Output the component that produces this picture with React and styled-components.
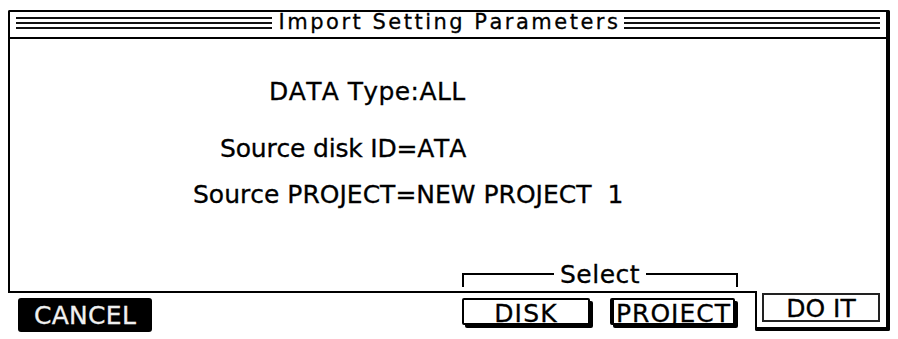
import React from 'react'
import styled, { createGlobalStyle } from 'styled-components'

const Global = createGlobalStyle`
  html, body {
    margin: 0;
    background: #fff;
  }
  body {
    font-family: "DejaVu Sans", "Liberation Sans", sans-serif;
    font-kerning: none;
    font-variant-ligatures: none;
    color: #000;
    -webkit-text-stroke: 0.3px currentColor;
  }
`

const Screen = styled.div`
  width: 898px;
  height: 339px;
  box-sizing: border-box;
  padding: 10px 0 0 8px;
  overflow: hidden;
`

const Window = styled.div`
  width: 882px;
  display: flex;
  flex-direction: column;
`

const Panel = styled.div`
  border: 2px solid #000;
  border-right-width: 4px;
  border-bottom: none;
  border-radius: 2px 2px 0 0;
`

const TitleBar = styled.div`
  height: 25px;
  display: flex;
  align-items: flex-start;
  padding: 0 6px;
  border-bottom: 2px solid #000;
`

const Stripes = styled.div`
  flex: 1;
  height: 12px;
  margin-top: 5px;
  background: repeating-linear-gradient(to bottom, #111 0 2px, transparent 2px 5px);
`

const Title = styled.span`
  font-size: 21px;
  line-height: 20px;
  letter-spacing: 2.5px;
  margin: 0 4px 0 7px;
  white-space: nowrap;
`

const Body = styled.div`
  height: 252px;
  display: flex;
  flex-direction: column;
`

const InfoLine = styled.div`
  font-size: 25px;
  line-height: 24px;
  white-space: pre;
  margin-left: ${p => p.$indent}px;
  margin-top: ${p => p.$gap}px;
  letter-spacing: ${p => p.$tracking}px;
`

const SelectRow = styled.div`
  margin: auto 0 4px 452px;
  width: 276px;
  height: 24px;
  display: flex;
  gap: 6px;
`

const Bracket = styled.div`
  flex: 1;
  margin-top: 10px;
  border-top: 2px solid #000;
  border-${p => p.$side}: 2px solid #000;
`

const SelectLabel = styled.span`
  font-size: 25px;
  line-height: 24px;
  letter-spacing: 0.5px;
`

const Footer = styled.div`
  display: flex;
`

const LeftBar = styled.div`
  width: 747px;
  box-sizing: border-box;
  border-top: 2px solid #000;
  display: flex;
  align-items: flex-start;
  padding: 5px 0 0 10px;
`

const Tab = styled.div`
  flex: 1;
  height: 40px;
  box-sizing: border-box;
  border: solid #000;
  border-width: 0 4px 4px 2px;
  border-radius: 0 0 2px 2px;
  padding: 2px 0 5px 5px;
`

const CancelButton = styled.div`
  width: 134px;
  height: 34px;
  box-sizing: border-box;
  padding-top: 6px;
  background: #000;
  color: #f0f0f0;
  border-radius: 3px;
  font-size: 25px;
  line-height: 24px;
  letter-spacing: 0.3px;
  text-align: center;
`

const KeyGroup = styled.div`
  margin-left: 310px;
  display: flex;
  gap: 20px;
`

const Key = styled.div`
  width: ${p => p.$width}px;
  height: 27px;
  box-sizing: border-box;
  border: 2px solid #000;
  border-left-width: ${p => (p.$heavy ? 4 : 2)}px;
  border-radius: 2px;
  box-shadow: 3px 3px 0 #000;
  background: #fff;
  padding-top: 4px;
  font-size: 25px;
  line-height: 19px;
  letter-spacing: ${p => p.$tracking}px;
  text-align: center;
`

const DoItButton = styled.div`
  width: 118px;
  height: 29px;
  box-sizing: border-box;
  border: 2px solid #222;
  padding-top: 4px;
  font-size: 25px;
  line-height: 19px;
  text-align: center;
  white-space: pre;
`

export default function App() {
  return (
    <Screen>
      <Global />
      <Window>
        <Panel>
          <TitleBar>
            <Stripes />
            <Title>Import Setting Parameters</Title>
            <Stripes />
          </TitleBar>
          <Body>
            <InfoLine $indent={259} $gap={41} $tracking={0.4}>DATA Type:ALL</InfoLine>
            <InfoLine $indent={210} $gap={33} $tracking={-0.2}>Source disk ID=ATA</InfoLine>
            <InfoLine $indent={183} $gap={22} $tracking={0}>Source PROJECT=NEW PROJECT  1</InfoLine>
            <SelectRow>
              <Bracket $side="left" />
              <SelectLabel>Select</SelectLabel>
              <Bracket $side="right" />
            </SelectRow>
          </Body>
        </Panel>
        <Footer>
          <LeftBar>
            <CancelButton>CANCEL</CancelButton>
            <KeyGroup>
              <Key $width={128} $tracking={1.2}>DISK</Key>
              <Key $width={125} $tracking={1} $heavy>PROJECT</Key>
            </KeyGroup>
          </LeftBar>
          <Tab>
            <DoItButton>DO IT</DoItButton>
          </Tab>
        </Footer>
      </Window>
    </Screen>
  )
}
